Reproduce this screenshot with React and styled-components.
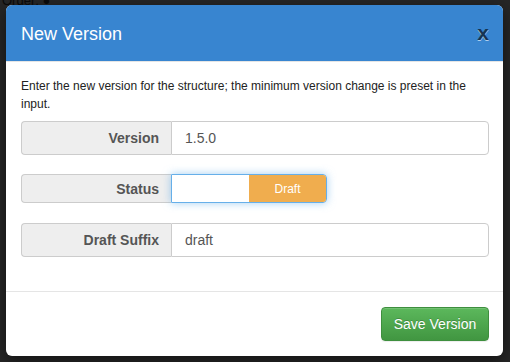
import React from "react";
import styled, { createGlobalStyle } from "styled-components";

const Global = createGlobalStyle`
  html, body { margin: 0; padding: 0; background: #262626; }
  body { font-family: "Liberation Sans", Arial, sans-serif; width: 510px; height: 362px; overflow: hidden; }
  * { box-sizing: border-box; }
`;

const Page = styled.div`
  position: relative;
  width: 510px;
  height: 362px;
  background: #262626;
  overflow: hidden;
`;

const BehindText = styled.div`
  position: absolute;
  left: 2px;
  top: -7px;
  font-size: 13px;
  color: #0a0a0a;
`;

const Modal = styled.div`
  position: absolute;
  left: 6px;
  top: 5px;
  width: 497px;
  background: #fff;
  border-radius: 6px;
  overflow: hidden;
  box-shadow: 0 5px 15px rgba(0, 0, 0, 0.5);
`;

const Header = styled.div`
  display: flex;
  align-items: center;
  justify-content: space-between;
  height: 57px;
  padding: 0 14px 0 15px;
  background: #3885d0;
  border-bottom: 1px solid #e5e5e5;
`;

const Title = styled.h4`
  margin: 0;
  font-size: 18px;
  font-weight: 400;
  color: #fff;
  line-height: 1;
  padding-top: 2px;
`;

const Close = styled.button`
  border: 0;
  background: none;
  padding: 0;
  font-family: "Liberation Sans", Arial, sans-serif;
  font-size: 21px;
  font-weight: 700;
  line-height: 1;
  color: #000;
  opacity: 0.6;
  text-shadow: 0 1px 0 #fff;
  margin-top: -2px;
  cursor: pointer;
`;

const Body = styled.div`
  padding: 15px 14px 34px 15px;
`;

const Intro = styled.p`
  margin: 0 0 8px;
  font-size: 12px;
  line-height: 18px;
  color: #222;
`;

const Group = styled.div`
  display: flex;
  height: ${(p) => p.h || 34}px;
  margin-top: ${(p) => p.mt || 0}px;
`;

const Addon = styled.div`
  flex: 0 0 150px;
  display: flex;
  align-items: center;
  justify-content: flex-end;
  padding: 0 12px;
  background: #eee;
  border: 1px solid #ccc;
  border-right: 0;
  border-radius: 4px 0 0 4px;
  font-size: 14px;
  font-weight: 700;
  color: #555;
`;

const Input = styled.div`
  flex: 1;
  display: flex;
  align-items: center;
  padding: 0 13px;
  border: 1px solid #ccc;
  border-radius: 0 4px 4px 0;
  font-size: 14px;
  color: #555;
`;

const Toggle = styled.div`
  display: flex;
  width: 156px;
  border: 1px solid #66afe9;
  border-radius: 0 4px 4px 0;
  overflow: hidden;
  box-shadow: inset 0 1px 1px rgba(0, 0, 0, 0.075), 0 0 8px rgba(102, 175, 233, 0.6);
`;

const ToggleHalf = styled.div`
  flex: 1;
  display: flex;
  align-items: center;
  justify-content: center;
  background: ${(p) => (p.$on ? "#f0ad4e" : "#fff")};
  color: #fff;
  font-size: 12px;
`;

const Footer = styled.div`
  display: flex;
  justify-content: flex-end;
  padding: 15px 14px 15px 15px;
  border-top: 1px solid #e5e5e5;
`;

const SaveButton = styled.button`
  width: 108px;
  height: 34px;
  border: 1px solid #3e8f3e;
  border-radius: 4px;
  background: linear-gradient(to bottom, #5cb85c 0%, #419641 100%);
  color: #fff;
  font-family: "Liberation Sans", Arial, sans-serif;
  font-size: 14px;
  text-shadow: 0 -1px 0 rgba(0, 0, 0, 0.2);
  box-shadow: inset 0 1px 0 rgba(255, 255, 255, 0.15), 0 1px 1px rgba(0, 0, 0, 0.075);
  cursor: pointer;
`;

export default function App() {
  return (
    <Page>
      <Global />
      <BehindText>Order: ●</BehindText>
      <Modal>
        <Header>
          <Title>New Version</Title>
          <Close>x</Close>
        </Header>
        <Body>
          <Intro>
            Enter the new version for the structure; the minimum version change is preset in the input.
          </Intro>
          <Group>
            <Addon>Version</Addon>
            <Input>1.5.0</Input>
          </Group>
          <Group h={29} mt={19}>
            <Addon>Status</Addon>
            <Toggle>
              <ToggleHalf />
              <ToggleHalf $on>Draft</ToggleHalf>
            </Toggle>
          </Group>
          <Group mt={20}>
            <Addon>Draft Suffix</Addon>
            <Input>draft</Input>
          </Group>
        </Body>
        <Footer>
          <SaveButton>Save Version</SaveButton>
        </Footer>
      </Modal>
    </Page>
  );
}
